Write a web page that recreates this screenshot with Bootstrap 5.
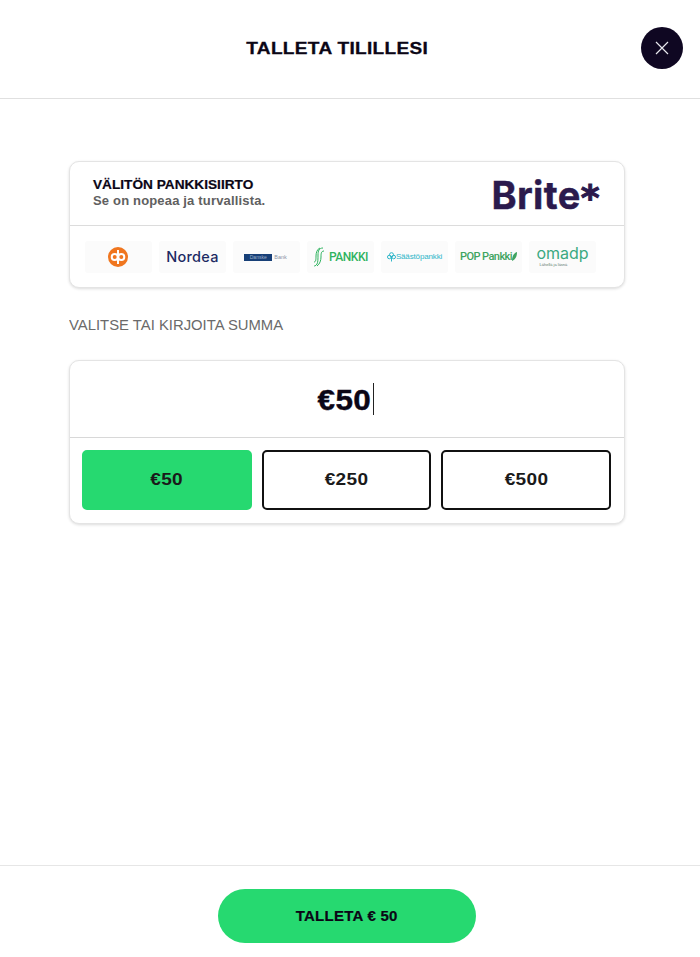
<!DOCTYPE html>
<html lang="fi">
<head>
    <meta charset="UTF-8">
    <meta name="viewport" content="width=device-width, initial-scale=1.0">
    <title>Talleta tilillesi</title>
    <link href="https://cdn.jsdelivr.net/npm/bootstrap@5.3.0/dist/css/bootstrap.min.css" rel="stylesheet">
    <style>
        html, body { height: 100%; }
        body { font-family: "Liberation Sans", Arial, sans-serif; color: #0b0616; background: #fff; }
        .dep-shell { height: 957px; }
        .dep-head { height: 99px; border-bottom: 1px solid #e0e0e0; }
        .dep-title { font-size: 17px; font-weight: 700; letter-spacing: .3px; margin: 0 0 -1px -25px; -webkit-text-stroke: .3px #0b0616; transform: scaleX(1.12); }
        .dep-close { top: 27px; right: 17px; width: 42px; height: 42px; background: #0f0722; border: 0; }
        .dep-main { padding: 62px 75px 0 69px; }
        .dep-box { border: 1px solid #e4e4e4; border-radius: 10px; box-shadow: 0 1px 3px rgba(0,0,0,.14); background: #fff; }
        .bank-top { height: 64px; padding: 0 24px 0 23px; border-bottom: 1px solid #dcdcdc; }
        .bank-name { font-size: 13px; font-weight: 700; line-height: 16px; -webkit-text-stroke: .2px #0b0616; margin-top: -2px; transform: scaleX(1.05); transform-origin: left; }
        .bank-sub { font-size: 13px; font-weight: 700; line-height: 16px; color: #606060; letter-spacing: .17px; }
        .brite-word { font-family: "Inter", sans-serif; font-weight: 700; font-size: 38px; line-height: 40px; color: #2b1a4d; letter-spacing: .4px; -webkit-text-stroke: .4px #2b1a4d; padding-top: 3px; }
        .brite-star { font-family: "DejaVu Sans", sans-serif; font-weight: 700; font-size: 36px; line-height: 40px; margin-left: 0; -webkit-text-stroke: 1px #2b1a4d; transform: translateY(3px); }
        .logo-row { height: 61px; padding: 15px 0 0 15px; gap: 7px; }
        .logo-tile { width: 67px; height: 32px; background: #fbfbfb; border-radius: 3px; white-space: nowrap; overflow: hidden; }
        .logo-op { padding-right: 1px; padding-bottom: 1px; }
        .lg-nordea { font-family: "Inter", sans-serif; font-size: 14.5px; font-weight: 500; color: #1c2a63; letter-spacing: .3px; }
        .lg-danske { width: 28px; height: 7px; background: #173f77; color: #9fb2cc; font-size: 5px; line-height: 7px; text-align: center; }
        .lg-danske-b { font-size: 5.5px; color: #8b95a5; margin-left: 2px; margin-right: 2px; }
        .lg-s { font-family: "Roboto", sans-serif; font-size: 12px; font-weight: 500; color: #2fb35f; letter-spacing: -.5px; }
        .lg-saasto { font-size: 8px; color: #2fb6c9; letter-spacing: -.15px; }
        .lg-pop { font-family: "Roboto", sans-serif; font-size: 11px; font-weight: 500; color: #3fa45f; letter-spacing: -.55px; }
        .lg-oma { font-family: "Inter", sans-serif; font-size: 16px; color: #3aa981; line-height: 17px; margin-top: -3px; }
        .lg-oma-sub { font-size: 4px; line-height: 5px; color: #5c7a6f; width: 50px; padding-left: 2px; }
        .dep-label { font-size: 14px; line-height: 18px; color: #6a6a6a; margin: 28px 0 26px; transform: scaleX(1.06); transform-origin: left; }
        .amt-input { height: 77px; border-bottom: 1px solid #d8d8d8; font-size: 30px; font-weight: 700; letter-spacing: .4px; -webkit-text-stroke: .4px #0b0616; }
        .amt-txt { transform: scaleX(1.05); transform-origin: right; }
        .amt-caret { width: 1px; height: 32px; background: #222; margin-left: 1px; }
        .amt-row { padding: 12px 13px 13px 12px; gap: 10px; }
        .amt-btn { height: 60px; flex: 1 1 0; border: 2px solid #111; border-radius: 5px; background: #fff; font-size: 17px; font-weight: 700; color: #1a1a1a; letter-spacing: .3px; }
        .amt-btn.amt-on { background: #26d970; border-color: #26d970; }
        .amt-btn span, .dep-cta span { display: inline-block; }
        .amt-btn span { transform: scaleX(1.12); }
        .dep-foot { height: 92px; border-top: 1px solid #e6e6e6; padding: 23px 6px 0 0; }
        .dep-cta { width: 258px; height: 54px; border: 0; border-radius: 27px; background: #26d970; font-size: 14px; font-weight: 700; color: #0b0616; letter-spacing: .25px; -webkit-text-stroke: .2px #0b0616; }
        .dep-cta span { transform: scaleX(1.07); }
    </style>
</head>
<body>
    <div class="dep-shell d-flex flex-column position-relative">
        <header class="dep-head d-flex align-items-center justify-content-center">
            <h1 class="dep-title">TALLETA TILILLESI</h1>
        </header>
        <button class="dep-close position-absolute rounded-circle d-flex align-items-center justify-content-center p-0" aria-label="Sulje">
            <svg width="14" height="14" viewBox="0 0 14 14"><path d="M1 1l12 12M13 1L1 13" stroke="#e8e8ee" stroke-width="1.2" fill="none"/></svg>
        </button>

        <main class="dep-main flex-grow-1">
            <section class="dep-box">
                <div class="bank-top d-flex align-items-center justify-content-between">
                    <div>
                        <div class="bank-name">VÄLITÖN PANKKISIIRTO</div>
                        <div class="bank-sub">Se on nopeaa ja turvallista.</div>
                    </div>
                    <div class="brite-word d-flex">Brite<span class="brite-star">*</span></div>
                </div>
                <div class="logo-row d-flex">
                    <div class="logo-tile logo-op d-flex align-items-center justify-content-center">
                        <svg width="20" height="20" viewBox="0 0 20 20"><circle cx="10" cy="10" r="10" fill="#f0761f"/><rect x="9" y="3" width="2" height="14" fill="#fff"/><circle cx="6.7" cy="10" r="3" fill="none" stroke="#fff" stroke-width="2"/><circle cx="13.3" cy="10" r="3" fill="none" stroke="#fff" stroke-width="2"/></svg>
                    </div>
                    <div class="logo-tile d-flex align-items-center justify-content-center lg-nordea">Nordea</div>
                    <div class="logo-tile d-flex align-items-center justify-content-center">
                        <span class="lg-danske">Danske</span><span class="lg-danske-b">Bank</span>
                    </div>
                    <div class="logo-tile d-flex align-items-center justify-content-center lg-s">
                        <svg class="me-1" width="12" height="20" viewBox="0 0 12 20"><path d="M10 1C6 1 5 4 5 8s0 7-1 9-3 2-3 2M11 4C8 4 8 7 8 10s-1 7-4 9M1 15c2 0 2-3 2-6s1-7 4-8" fill="none" stroke="#2fb35f" stroke-width="1"/></svg>PANKKI
                    </div>
                    <div class="logo-tile d-flex align-items-center justify-content-center lg-saasto">
                        <svg width="9" height="10" viewBox="0 0 9 10"><circle cx="4.5" cy="2.7" r="2" fill="none" stroke="#2fb6c9"/><circle cx="2.3" cy="5" r="1.8" fill="none" stroke="#2fb6c9"/><circle cx="6.7" cy="5" r="1.8" fill="none" stroke="#2fb6c9"/><path d="M4.5 4v5.5" stroke="#2fb6c9"/></svg>Säästöpankki
                    </div>
                    <div class="logo-tile d-flex align-items-center justify-content-center lg-pop">
                        POP Pankki<svg width="5" height="10" viewBox="0 0 5 10"><path d="M0 9C0 4 2 1 5 0c0 4-1 7-5 9z" fill="#3fa45f"/></svg>
                    </div>
                    <div class="logo-tile d-flex flex-column align-items-center justify-content-center">
                        <div class="lg-oma">omadp</div>
                        <div class="lg-oma-sub">Lähellä ja läsnä</div>
                    </div>
                </div>
            </section>

            <div class="dep-label">VALITSE TAI KIRJOITA SUMMA</div>

            <section class="dep-box">
                <div class="amt-input d-flex align-items-center justify-content-center"><span class="amt-txt">€50</span><span class="amt-caret"></span></div>
                <div class="amt-row d-flex">
                    <button class="amt-btn amt-on"><span>€50</span></button>
                    <button class="amt-btn"><span>€250</span></button>
                    <button class="amt-btn"><span>€500</span></button>
                </div>
            </section>
        </main>

        <footer class="dep-foot d-flex justify-content-center">
            <button class="dep-cta"><span>TALLETA € 50</span></button>
        </footer>
    </div>
    <script src="https://cdn.jsdelivr.net/npm/bootstrap@5.3.0/dist/js/bootstrap.bundle.min.js"></script>
</body>
</html>
